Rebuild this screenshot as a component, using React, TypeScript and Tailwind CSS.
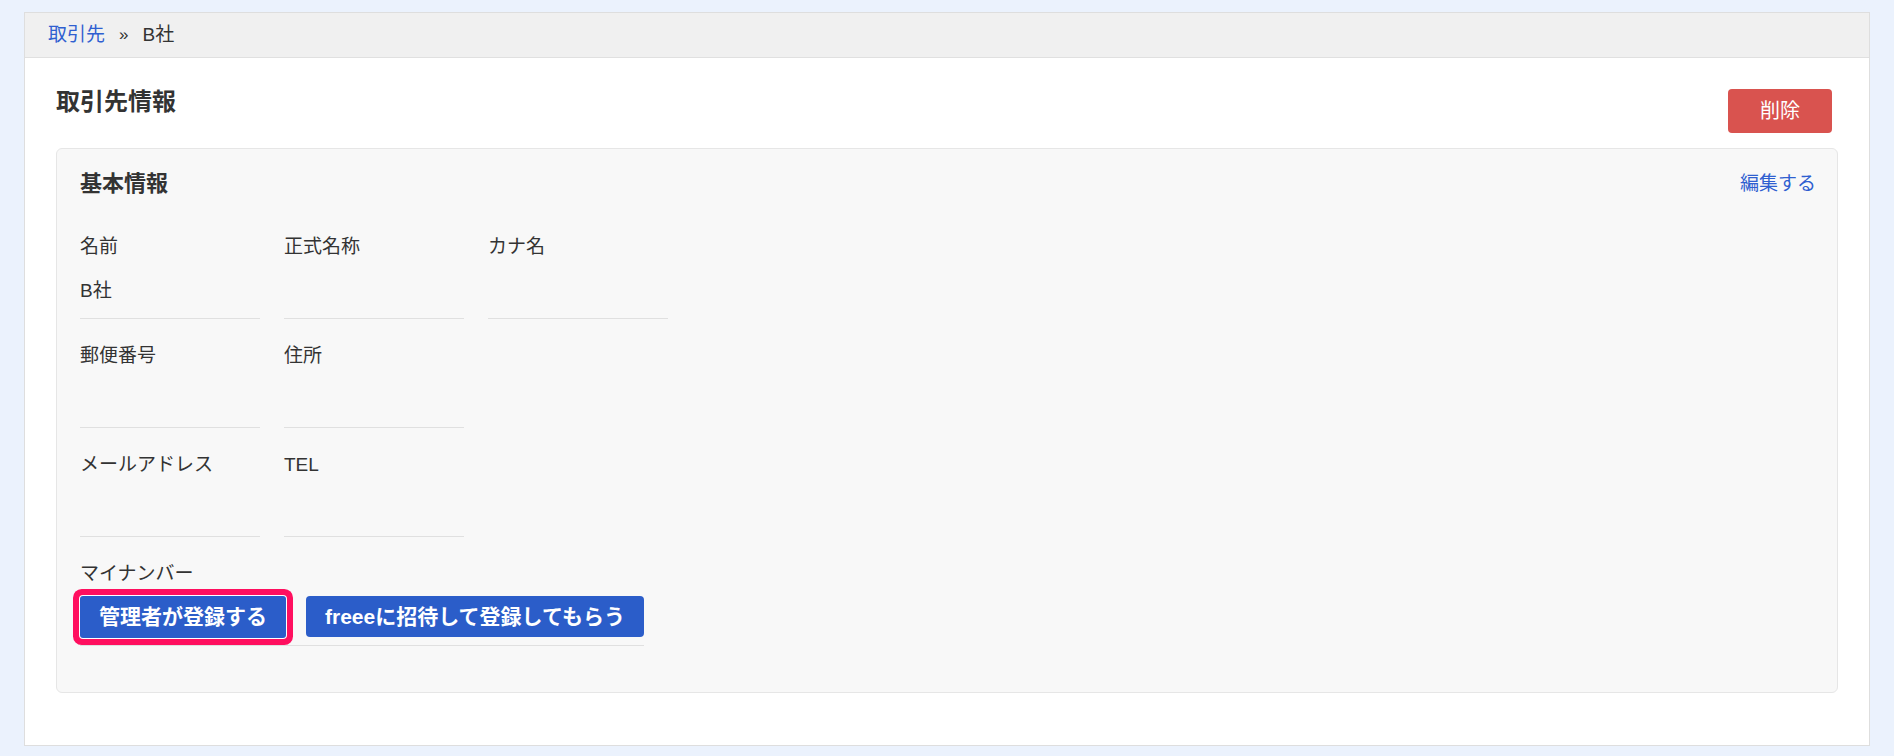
import React from 'react';

type Field = { label: string; value?: string };

const rows: Field[][] = [
  [{ label: '名前', value: 'B社' }, { label: '正式名称' }, { label: 'カナ名' }],
  [{ label: '郵便番号' }, { label: '住所' }],
  [{ label: 'メールアドレス' }, { label: 'TEL' }],
];

function FieldItem({ field }: { field: Field }) {
  return (
    <div className="border-b border-[#e0e0e0] pb-[13px]">
      <div className="text-[19px] leading-[28px]">{field.label}</div>
      <div className="mt-[16px] h-[28px] text-[19px] leading-[28px]">{field.value}</div>
    </div>
  );
}

export default function App() {
  return (
    <div
      className="min-h-screen bg-[#ebf2fd] px-[24px] pt-[12px] pb-[11px] text-[#333]"
      style={{ fontFamily: '"Liberation Sans", "Noto Sans CJK JP", sans-serif' }}
    >
      <div className="border border-[#dedede] bg-white">
        {/* パンくず */}
        <div className="flex h-[45px] items-center gap-[14px] border-b border-[#e0e0e0] bg-[#f0f0f0] px-[23px] text-[19px]">
          <a className="text-[#2f5fd0]">取引先</a>
          <span className="text-[17px]">»</span>
          <span>B社</span>
        </div>

        <div className="px-[31px] pb-[52px]">
          {/* タイトル行 */}
          <div className="flex items-start justify-between pt-[28px]">
            <h1 className="text-[24px] font-bold leading-[32px]">取引先情報</h1>
            <button className="mt-[3px] mr-[6px] h-[44px] w-[104px] rounded-[4px] bg-[#d9534f] text-[20px] text-white">
              削除
            </button>
          </div>

          {/* 基本情報カード */}
          <div className="mt-[15px] rounded-md border border-[#e6e6e6] bg-[#f8f8f8] px-[23px] pt-[19px] pb-[46px]">
            <div className="flex items-center justify-between">
              <h2 className="text-[22px] font-bold leading-[32px]">基本情報</h2>
              <a className="mr-[-2px] text-[19px] text-[#2f5fd0]">編集する</a>
            </div>

            <div className="mt-[33px] flex flex-col gap-[23px]">
              {rows.map((row, i) => (
                <div key={i} className="grid grid-cols-[180px_180px_180px] gap-x-[24px]">
                  {row.map((f) => (
                    <FieldItem key={f.label} field={f} />
                  ))}
                </div>
              ))}

              {/* マイナンバー */}
              <div className="inline-flex w-fit flex-col border-b border-[#e0e0e0] pb-[7px]">
                <div className="text-[19px] leading-[28px]">マイナンバー</div>
                <div className="mt-[8px] flex gap-[20px]">
                  <button className="h-[42px] rounded-[3px] bg-[#2b5dc9] px-[19px] text-[21px] font-bold text-white shadow-[0_0_0_1px_#ffffff,0_0_0_7px_#ff0f5f]">
                    管理者が登録する
                  </button>
                  <button className="h-[41px] rounded-[4px] bg-[#2b5dc9] px-[19px] text-[21px] font-bold text-white">
                    freeeに招待して登録してもらう
                  </button>
                </div>
              </div>
            </div>
          </div>
        </div>
      </div>
    </div>
  );
}
